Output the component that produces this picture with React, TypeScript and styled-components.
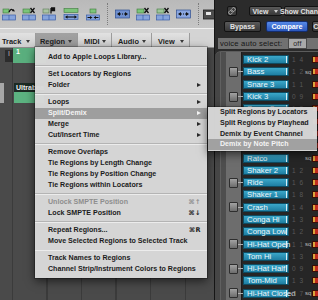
import { createGlobalStyle, styled } from "styled-components"
import { Link } from "lucide-react"

type Entry = { label?: string; sub?: boolean; keys?: string; off?: boolean; on?: boolean; sep?: boolean }

const menu: Entry[] = [
    { label: "Add to Apple Loops Library..." },
    { sep: true },
    { label: "Set Locators by Regions" },
    { label: "Folder", sub: true },
    { sep: true },
    { label: "Loops", sub: true },
    { label: "Split/Demix", sub: true, on: true },
    { label: "Merge", sub: true },
    { label: "Cut/Insert Time", sub: true },
    { sep: true },
    { label: "Remove Overlaps" },
    { label: "Tie Regions by Length Change" },
    { label: "Tie Regions by Position Change" },
    { label: "Tie Regions within Locators" },
    { sep: true },
    { label: "Unlock SMPTE Position", keys: "⌘↑", off: true },
    { label: "Lock SMPTE Position", keys: "⌘↓" },
    { sep: true },
    { label: "Repeat Regions...", keys: "⌘R" },
    { label: "Move Selected Regions to Selected Track" },
    { sep: true },
    { label: "Track Names to Regions" },
    { label: "Channel Strip/Instrument Colors to Regions" },
]

const subMenu = [
    { label: "Split Regions by Locators" },
    { label: "Split Regions by Playhead" },
    { label: "Demix by Event Channel" },
    { label: "Demix by Note Pitch", on: true },
]

const tabs = [
    { label: "Track", w: 36, pl: 2 },
    { label: "Region", w: 42, pl: 4, on: true },
    { label: "MIDI", w: 34, pl: 6 },
    { label: "Audio", w: 40, pl: 6 },
    { label: "View", w: 38, pl: 6 },
]

const kit = [
    { name: "Kick 2", num: "1 4" },
    { name: "Bass", num: "1 2", sq: true, knob: true },
    { name: "Snare 3", num: "1 1" },
    { name: "Kick 3", num: "0 9", knob: true },
    { name: "Snare 2", num: "1 2" },
    { name: "Kick 1", num: "1 0", knob: true },
    { name: "Snare 1", num: "1 1" },
    { name: "Rim", num: "1 2", knob: true },
    { name: "Ratco", num: "", sq: true },
    { name: "Shaker 2", num: "1 2" },
    { name: "Ride", num: "1 6", knob: true },
    { name: "Shaker 1", num: "1 8" },
    { name: "Crash", num: "1 4", knob: true },
    { name: "Conga Hi", num: "1 3" },
    { name: "Conga Low", num: "1 2" },
    { name: "Hi-Hat Open", num: "1 1", sq: true, knob: true },
    { name: "Tom Hi", num: "1 3" },
    { name: "Hi-Hat Half", num: "0 9", knob: true },
    { name: "Tom-Mid", num: "1 3" },
    { name: "Hi-Hat Closed", num: "0 7", sq: true, knob: true },
]

// toolbar icons: little region glyphs, green on top, blue below
function ToolIcon({ kind }: { kind: string }) {
    const blue = (
        <>
            <rect x="0.5" y="8" width="13" height="5" fill="#86a4dc" stroke="#3b5ea8" strokeWidth="0.7" />
            <line x1="7" y1="8" x2="7" y2="13" stroke="#3b5ea8" strokeWidth="0.7" />
        </>
    )
    switch (kind) {
        case "glue":
            return (
                <svg width="14" height="14" viewBox="0 0 14 14">
                    <rect x="1" y="2" width="6" height="4" fill="#7cc47a" stroke="#3f7a3c" strokeWidth="0.6" />
                    <path d="M7 5 Q9 0.5 11.5 4" stroke="#111" strokeWidth="1.3" fill="none" />
                    <path d="M10 4 L13 4.5 L11.5 2 Z" fill="#111" />
                    {blue}
                </svg>
            )
        case "cut":
        case "cut2":
            return (
                <svg width="14" height="14" viewBox="0 0 14 14">
                    <rect x="1" y="2" width="7" height="4" fill={kind === "cut" ? "#7cc47a" : "#9fc49a"} stroke="#3f7a3c" strokeWidth="0.6" />
                    <path d="M8.5 1 L12.5 6 M12.5 1 L8.5 6" stroke="#111" strokeWidth="1.3" />
                    {blue}
                </svg>
            )
        case "flag":
            return (
                <svg width="14" height="14" viewBox="0 0 14 14">
                    <rect x="1" y="2" width="6" height="4" fill="#a9c3a2" stroke="#5b7a56" strokeWidth="0.6" />
                    <path d="M9 1 V6.5 M9 1 H12.5 V3.5 H9" stroke="#111" strokeWidth="1.3" fill="#111" />
                    {blue}
                </svg>
            )
        case "stretch":
            return (
                <svg width="16" height="14" viewBox="0 0 16 14">
                    <rect x="1" y="1.5" width="14" height="4" fill="#7cc47a" stroke="#3f7a3c" strokeWidth="0.6" />
                    <rect x="1" y="7.5" width="14" height="5" fill="#86a4dc" stroke="#3b5ea8" strokeWidth="0.7" />
                    <path d="M4 10 H12" stroke="#111" strokeWidth="1.1" />
                    <path d="M2 10 L4.5 8.3 V11.7 Z M14 10 L11.5 8.3 V11.7 Z" fill="#111" />
                </svg>
            )
        case "squeeze":
            return (
                <svg width="14" height="14" viewBox="0 0 14 14">
                    <rect x="4" y="2" width="6" height="4" fill="#7cc47a" stroke="#3f7a3c" strokeWidth="0.6" />
                    <rect x="0.5" y="8" width="13" height="5" fill="#86a4dc" stroke="#3b5ea8" strokeWidth="0.7" />
                    <path d="M6.5 10.5 L4 9 V12 Z M7.5 10.5 L10 9 V12 Z" fill="#111" />
                    <path d="M1.5 10.5 H4.5 M9.5 10.5 H12.5" stroke="#111" strokeWidth="1" />
                </svg>
            )
        case "shift":
        case "shift2":
            return (
                <svg width="15" height="14" viewBox="0 0 15 14">
                    <rect x="0.5" y="3" width="14" height="8" fill={kind === "shift" ? "#6f8fcf" : "#8aa6e0"} stroke="#2f4f8f" strokeWidth="0.7" />
                    <path d="M2 7 L5 5 V9 Z M13 7 L10 5 V9 Z" fill="#111" />
                    <path d="M5 7 H10" stroke="#111" strokeWidth="1" strokeDasharray="1 1" />
                </svg>
            )
        default:
            return (
                <svg width="12" height="14" viewBox="0 0 12 14">
                    <rect x="0.5" y="3" width="11" height="9" fill="#4d4d4d" stroke="#1f1f1f" strokeWidth="0.8" />
                    <rect x="3" y="5" width="5" height="3" fill="#e6e6e6" />
                </svg>
            )
    }
}

const tools: { kind: string; w: number }[] = [
    { kind: "glue", w: 18 },
    { kind: "cut", w: 21 },
    { kind: "flag", w: 20 },
    { kind: "stretch", w: 23 },
    { kind: "squeeze", w: 22 },
    { kind: "sep", w: 7 },
    { kind: "shift", w: 22 },
    { kind: "cut", w: 20 },
    { kind: "cut2", w: 20 },
    { kind: "shift2", w: 21 },
    { kind: "sep", w: 8 },
    { kind: "dark", w: 14 },
]

export default function App() {
    return (
        <>
            <GlobalStyle />
            <Screen>
                <LeftPane>
                    <Toolbar>
                        {tools.map((t, i) => (
                            <ToolSlot key={i} $w={t.w}>
                                {t.kind === "sep" ? <Dots /> : <ToolIcon kind={t.kind} />}
                            </ToolSlot>
                        ))}
                    </Toolbar>
                    <TabBar>
                        {tabs.map((t) => (
                            <Tab key={t.label} $w={t.w} $pl={t.pl} $on={t.on}>
                                {t.label}
                                <DownArrow />
                            </Tab>
                        ))}
                    </TabBar>
                    <Arrange>
                        <Lane $h={17}>
                            <Marker>I</Marker>
                            <TopRegion>1</TopRegion>
                        </Lane>
                        <Lane $h={18} />
                        <Lane $h={20}>
                            <HeaderStub />
                            <Region>
                                <RegionHead>Ultrabeat</RegionHead>
                                <RegionBody />
                            </Region>
                        </Lane>
                    </Arrange>
                </LeftPane>

                <RightPane>
                    <PlugRow $h={19} $pt={6} $pl={12}>
                        <LinkBtn>
                            <Link size={8} color="#c8c8c8" strokeWidth={2.5} />
                        </LinkBtn>
                        <DarkBtn $w={33} $ml={12}>
                            View <DownArrow $light />
                        </DarkBtn>
                        <DarkBtn $w={40} $ml={2}>Show Channel</DarkBtn>
                    </PlugRow>
                    <PlugRow $h={18} $pt={2} $pl={9}>
                        <DarkBtn $w={37} $ml={0} $h={11}>Bypass</DarkBtn>
                        <BlueBtn>Compare</BlueBtn>
                        <DarkBtn $w={20} $ml={4} $h={11}>Copy</DarkBtn>
                    </PlugRow>
                    <VoiceRow>
                        voice auto select:
                        <OffBox>off</OffBox>
                    </VoiceRow>
                    <Kit>
                        {kit.map((k, i) => (
                            <KitRow key={i}>
                                <KnobSlot>
                                    {k.knob && (
                                        <>
                                            <Knob />
                                            <Wire />
                                        </>
                                    )}
                                </KnobSlot>
                                <NameField>{k.name}</NameField>
                                <Num>{k.num}</Num>
                                <Sq>{k.sq ? "sq" : ""}</Sq>
                                <Mute />
                            </KitRow>
                        ))}
                    </Kit>
                </RightPane>

                <Menu>
                    {menu.map((m, i) =>
                        m.sep ? (
                            <Sep key={i} />
                        ) : (
                            <Item key={i} $on={m.on} $off={m.off}>
                                <span>{m.label}</span>
                                {m.sub && <SubArrow $on={m.on} />}
                                {m.keys && <Keys>{m.keys}</Keys>}
                            </Item>
                        )
                    )}
                </Menu>

                <SubMenu>
                    {subMenu.map((m) => (
                        <SubItem key={m.label} $on={m.on}>
                            {m.label}
                        </SubItem>
                    ))}
                </SubMenu>
            </Screen>
        </>
    )
}

const GlobalStyle = createGlobalStyle`
html, body {
    margin: 0;
    padding: 0;
    background: #3b3b3b;
}
body {
    font-family: "Liberation Sans", "DejaVu Sans", Arial, sans-serif;
}
`

const Screen = styled.div`
position: relative;
width: 318px;
height: 300px;
display: flex;
overflow: hidden;
background: #3b3b3b;
`
const LeftPane = styled.div`
width: 214px;
display: flex;
flex-direction: column;
`
const Toolbar = styled.div`
height: 28px;
display: flex;
align-items: center;
background: linear-gradient(#b9b9b9, #c6c6c6);
`
const ToolSlot = styled.div<{ $w: number }>`
width: ${(p) => p.$w}px;
height: 100%;
display: flex;
justify-content: center;
align-items: center;
flex-shrink: 0;
`
const Dots = styled.div`
width: 0;
height: 22px;
border-left: 1px dotted #7c7c7c;
`
const TabBar = styled.div`
height: 20px;
box-sizing: border-box;
padding-top: 4px;
display: flex;
background: #d4d4d4;
border-top: 1px solid #f0f0f0;
border-bottom: 1px solid #8d8d8d;
`
const Tab = styled.div<{ $w: number; $pl: number; $on?: boolean }>`
width: ${(p) => p.$w}px;
box-sizing: border-box;
padding: 2px 5px 0 ${(p) => p.$pl}px;
display: flex;
align-items: center;
justify-content: space-between;
font-size: 7.4px;
font-weight: 700;
color: #222;
border-right: 1px solid #9c9c9c;
background: ${(p) => (p.$on ? "linear-gradient(#a2a2a2, #999)" : "linear-gradient(#e2e2e2, #cdcdcd)")};
`
const DownArrow = styled.span<{ $light?: boolean }>`
width: 0;
height: 0;
border-top: 3px solid ${(p) => (p.$light ? "#cfcfcf" : "#3a3a3a")};
border-left: 2.5px solid transparent;
border-right: 2.5px solid transparent;
`
const Arrange = styled.div`
flex: 1;
background-color: #4a4a4a;
background-image: repeating-linear-gradient(90deg, transparent 0 12px, #3b3b3b 12px 13.5px, transparent 13.5px 34.5px);
`
const Lane = styled.div<{ $h: number }>`
height: ${(p) => p.$h}px;
display: flex;
align-items: stretch;
`
const Marker = styled.div`
width: 8px;
margin: 2px 0 3px 5px;
background: #2c2c2c;
color: #bbb;
font-size: 7px;
text-align: center;
`
const TopRegion = styled.div`
width: 30px;
margin-bottom: 2px;
background: #5aaf7e;
color: #fff;
font-size: 7px;
font-weight: 700;
padding-left: 3px;
`
const HeaderStub = styled.div`
width: 4px;
background: #a7a7a7;
`
const Region = styled.div`
width: 30px;
margin-left: 10px;
display: flex;
flex-direction: column;
`
const RegionHead = styled.div`
height: 9px;
background: #1c2a23;
color: #f2f2f2;
font-size: 7px;
font-weight: 700;
padding-left: 2px;
line-height: 9px;
white-space: nowrap;
overflow: hidden;
`
const RegionBody = styled.div`
flex: 1;
background: #5cb381;
`
const RightPane = styled.div`
width: 104px;
display: flex;
flex-direction: column;
background: #2b2b2b;
border-left: 1px solid #161616;
box-sizing: border-box;
`
const PlugRow = styled.div<{ $h: number; $pt: number; $pl: number }>`
height: ${(p) => p.$h}px;
box-sizing: border-box;
padding: ${(p) => p.$pt}px 0 0 ${(p) => p.$pl}px;
display: flex;
align-items: flex-start;
white-space: nowrap;
`
const LinkBtn = styled.div`
width: 14px;
height: 10px;
display: flex;
justify-content: center;
align-items: center;
background: #3d3d3d;
border: 1px solid #141414;
border-radius: 2px;
box-sizing: border-box;
`
const DarkBtn = styled.div<{ $w: number; $ml: number; $h?: number }>`
flex-shrink: 0;
width: ${(p) => p.$w}px;
height: ${(p) => p.$h ?? 10}px;
margin-left: ${(p) => p.$ml}px;
box-sizing: border-box;
display: flex;
justify-content: center;
align-items: center;
gap: 6px;
background: linear-gradient(#5a5a5a, #383838);
border: 1px solid #121212;
border-radius: 2px;
color: #e2e2e2;
font-size: 7px;
font-weight: 700;
`
const BlueBtn = styled.div`
flex-shrink: 0;
width: 42px;
height: 11px;
margin-left: 5px;
box-sizing: border-box;
display: flex;
justify-content: center;
align-items: center;
background: linear-gradient(#5689e8, #2a57bb);
border: 1px solid #142d6e;
border-radius: 2px;
color: #fff;
font-size: 7.2px;
font-weight: 700;
`
const VoiceRow = styled.div`
height: 11px;
margin: 1px 0 2px 3px;
padding-left: 2px;
display: flex;
align-items: center;
background: #717171;
color: #161616;
font-size: 7.6px;
letter-spacing: 0.2px;
white-space: nowrap;
`
const OffBox = styled.span`
margin-left: 6px;
padding: 0 4px;
height: 9px;
line-height: 9px;
background: #a9a9a9;
border: 1px solid #4a4a4a;
color: #222;
font-size: 7px;
`
const Kit = styled.div`
flex: 1;
padding-top: 1.5px;
border-top-left-radius: 6px;
border-top: 1px solid #5c5c5c;
background: linear-gradient(90deg, #474747 0 5px, #606060 5px 6px, #4e4e4e 6px 11px, #6d6d6d 11px 26px, #1c1c1c 26px 27px, #262626 27px);
`
const KitRow = styled.div`
height: 12.3px;
display: flex;
align-items: center;
`
const KnobSlot = styled.div`
width: 28px;
height: 100%;
box-sizing: border-box;
padding-left: 14px;
display: flex;
align-items: center;
flex-shrink: 0;
`
const Knob = styled.div`
width: 9px;
height: 10px;
box-sizing: border-box;
background: linear-gradient(#a2a2a2, #6c6c6c);
border: 1px solid #2e2e2e;
border-radius: 1px;
`
const Wire = styled.div`
flex: 1;
height: 1px;
background: #b0b0b0;
`
const NameField = styled.div`
width: 46px;
height: 9px;
flex-shrink: 0;
box-sizing: border-box;
padding-left: 3px;
background: linear-gradient(90deg, transparent 42px, #d9eff6 42px 43px, transparent 43px), linear-gradient(#3ba7c9, #1e7ea2);
border: 1px solid #0f4c62;
color: #eef8fb;
font-size: 7.8px;
line-height: 8px;
white-space: nowrap;
`
const Num = styled.div`
width: 13px;
margin-left: 3px;
flex-shrink: 0;
color: #595959;
font-size: 6.5px;
letter-spacing: 1px;
`
const Sq = styled.div`
width: 7px;
flex-shrink: 0;
color: #bdbdbd;
font-size: 6px;
`
const Mute = styled.div`
width: 10px;
height: 7px;
flex-shrink: 0;
background: linear-gradient(90deg, #d9a53d 0 2px, #c12c1e 2px);
border: 1px solid #3a0d08;
box-sizing: border-box;
`
const Menu = styled.div`
position: absolute;
left: 35px;
top: 47px;
width: 172px;
padding: 4.5px 0 3px;
background: rgba(216, 216, 216, 0.98);
box-shadow: 0 3px 9px rgba(0, 0, 0, 0.6), 0 0 0 1px rgba(0, 0, 0, 0.25);
`
const Item = styled.div<{ $on?: boolean; $off?: boolean }>`
height: 11px;
box-sizing: border-box;
padding: 0 6px 0 13px;
display: flex;
align-items: center;
justify-content: space-between;
font-size: 7.1px;
font-weight: 700;
white-space: nowrap;
color: ${(p) => (p.$off ? "#8e8e8e" : p.$on ? "#f4f4f4" : "#1b1b1b")};
background: ${(p) => (p.$on ? "#9e9e9e" : "transparent")};
`
const SubArrow = styled.span<{ $on?: boolean }>`
width: 0;
height: 0;
border-left: 4px solid ${(p) => (p.$on ? "#f4f4f4" : "#2a2a2a")};
border-top: 2.5px solid transparent;
border-bottom: 2.5px solid transparent;
`
const Keys = styled.span`
font-family: "DejaVu Sans", sans-serif;
font-size: 6.5px;
letter-spacing: 0.5px;
`
const Sep = styled.div`
height: 6px;
background: linear-gradient(transparent 2.5px, #b4b4b4 2.5px 3.5px, #ececec 3.5px 4.5px, transparent 4.5px);
`
const SubMenu = styled.div`
position: absolute;
left: 208px;
top: 107px;
width: 109px;
padding-bottom: 1px;
background: rgba(214, 214, 214, 0.98);
box-shadow: 0 3px 9px rgba(0, 0, 0, 0.6), 0 0 0 1px rgba(0, 0, 0, 0.25);
`
const SubItem = styled.div<{ $on?: boolean }>`
height: 10.7px;
box-sizing: border-box;
padding-left: 12px;
display: flex;
align-items: center;
font-size: 7.1px;
font-weight: 700;
white-space: nowrap;
color: ${(p) => (p.$on ? "#f4f4f4" : "#1b1b1b")};
background: ${(p) => (p.$on ? "#a1a1a1" : "transparent")};
`
